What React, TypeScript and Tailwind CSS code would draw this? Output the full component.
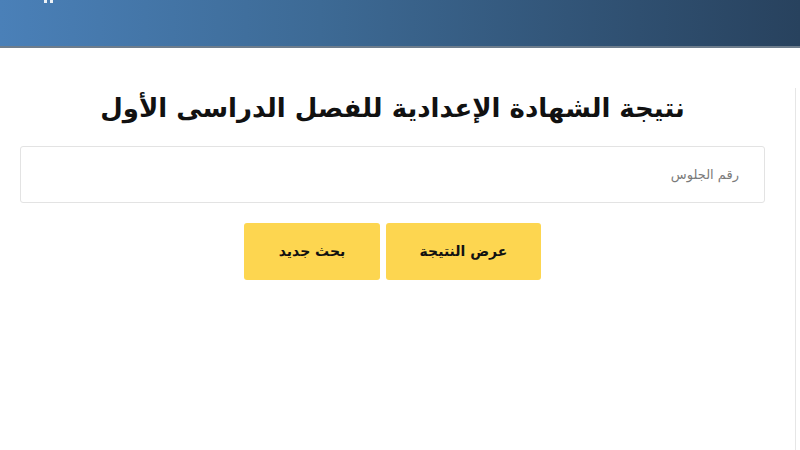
import React from "react";

const App: React.FC = () => {
    return (
        <div
            dir="rtl"
            className="w-[800px] h-[450px] bg-white overflow-hidden flex flex-col"
            style={{ fontFamily: '"DejaVu Sans", "Noto Sans", sans-serif' }}
        >
            <div className="h-[48px] shrink-0 bg-gradient-to-l from-[#28425e] via-[#3d6a95] via-60% to-[#4a80b8] border-b-2 border-[#6e7d8c] relative">
                {/* clipped logo at the top edge */}
                <div className="absolute left-[44px] top-0 flex gap-[3px]">
                    <div className="w-[3px] h-[3px] bg-white/90" />
                    <div className="w-[3px] h-[3px] bg-white/90" />
                </div>
            </div>
            <div className="flex flex-1">
                <div className="w-[5px] shrink-0 flex flex-col">
                    <div className="h-[40px]" />
                    <div className="flex-1 border-l border-[#e6e6e6]" />
                </div>
                <div className="flex-1 flex flex-col items-center pt-[40px]">
                    <h1 className="text-[26px] font-bold text-[#111] leading-[40px] mb-[18px] mr-[10px]">
                        نتيجة الشهادة الإعدادية للفصل الدراسى الأول
                    </h1>
                    <div className="w-[745px] mr-[30px] h-[57px] border border-[#e3e3e3] rounded-[3px] flex items-center pr-[25px] self-start">
                        <span className="text-[13px] text-[#7a7a7a]">رقم الجلوس</span>
                    </div>
                    <div className="flex gap-[6px] mt-[20px] mr-[10px]">
                        <button className="w-[155px] h-[57px] bg-[#fdd650] rounded-[3px] text-[14px] font-bold text-[#111]">
                            عرض النتيجة
                        </button>
                        <button className="w-[136px] h-[57px] bg-[#fdd650] rounded-[3px] text-[14px] font-bold text-[#111]">
                            بحث جديد
                        </button>
                    </div>
                </div>
            </div>
        </div>
    );
};

export default App;
